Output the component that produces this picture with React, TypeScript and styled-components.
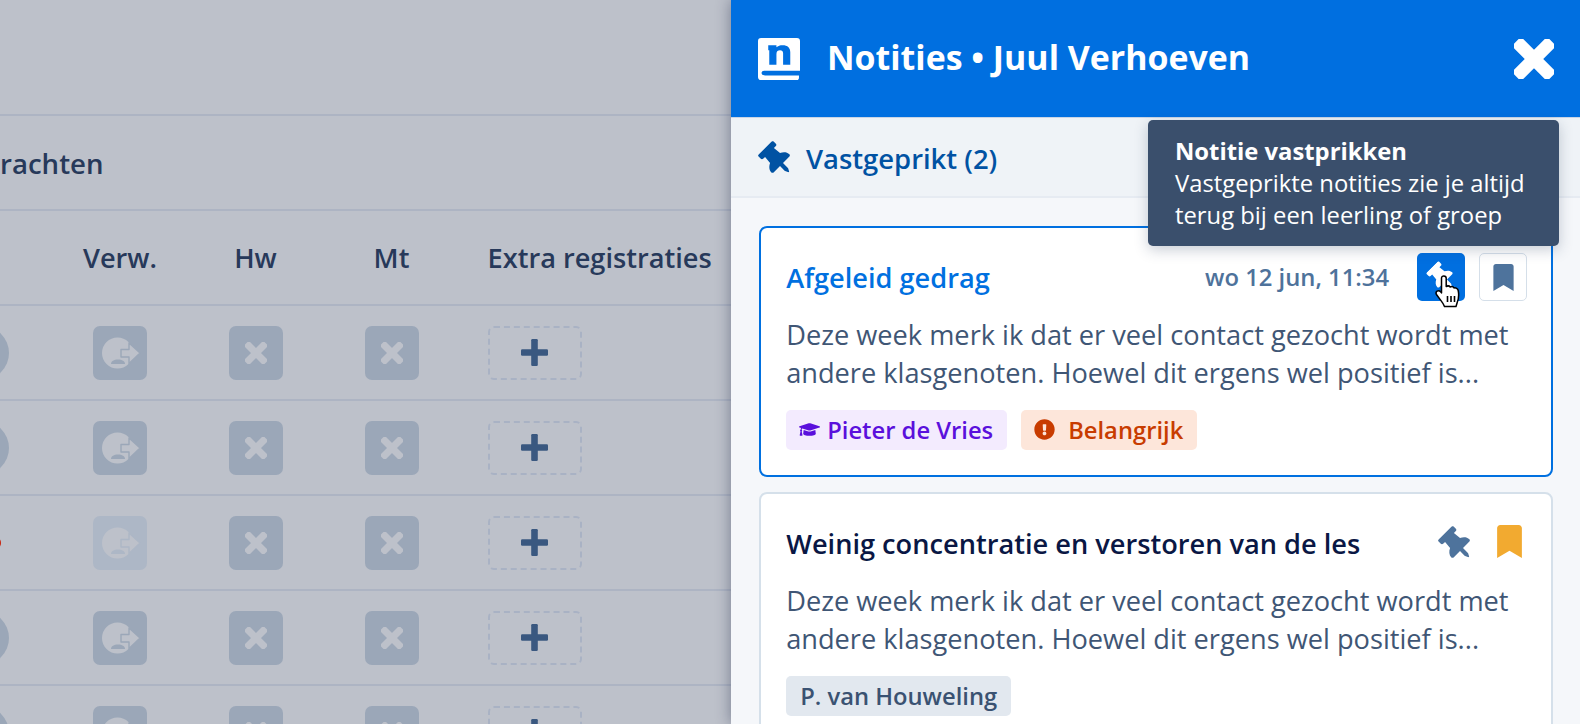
import styled, { createGlobalStyle } from "styled-components";
import { FaBookmark, FaExclamationCircle, FaGraduationCap, FaThumbtack } from "react-icons/fa";

const GlobalStyle = createGlobalStyle`
	html, body {
		margin: 0;
		height: 724px;
		overflow: hidden;
		font-family: "Open Sans", "Noto Sans", sans-serif;
	}
`;

const Page = styled.div`
	display: flex;
	width: 1580px;
	height: 724px;
	overflow: hidden;
	background: #bdc1ca;
`;

const Backdrop = styled.div`
	flex: 0 0 731px;
	overflow: hidden;
	color: #27395a;
`;

const TopBar = styled.div`
	height: 114px;
	border-bottom: 2px solid #adb4c3;
`;

const TabBar = styled.div`
	height: 93px;
	display: flex;
	align-items: center;
	border-bottom: 2px solid #adb4c3;
	font-size: 27.6px;
	font-weight: 600;
`;

const TableRow = styled.div`
	height: 93px;
	display: grid;
	grid-template-columns: 93px 135.5px 136px 123px 1fr;
	align-items: center;
	border-bottom: 2px solid #adb4c3;
`;

const HeadCell = styled.div<{ $left?: boolean }>`
	width: 54px;
	display: flex;
	justify-content: ${(props) => (props.$left ? "flex-start" : "center")};
	white-space: nowrap;
	font-size: 27.2px;
	font-weight: 600;
`;

const Avatar = styled.div`
	width: 54px;
	height: 54px;
	margin-left: -45px;
	border-radius: 50%;
	background: #9ba7b8;
`;

const AlertMark = styled.div`
	width: 11px;
	height: 12px;
	margin-left: -10px;
	border-radius: 50%;
	background: #c8240f;
`;

const StatusBox = styled.div<{ $faded?: boolean }>`
	width: 54px;
	height: 54px;
	display: flex;
	align-items: center;
	justify-content: center;
	border-radius: 7px;
	background: ${(props) => (props.$faded ? "#adb7c6" : "#9ba7b8")};
`;

const AddBox = styled.div`
	width: 94px;
	height: 54px;
	box-sizing: border-box;
	display: flex;
	align-items: center;
	justify-content: center;
	border: 2px dashed #a9b2c4;
	border-radius: 6px;
`;

const Panel = styled.div`
	flex: 1;
	display: flex;
	flex-direction: column;
	height: 724px;
	background: #f5f7fa;
	box-shadow: 0 0 14px rgba(30, 40, 70, 0.45);
	position: relative;
`;

const PanelHeader = styled.div`
	flex: 0 0 117px;
	display: flex;
	align-items: center;
	padding: 0 26px 0 27px;
	background: #006fe0;
	color: #fff;
	font-size: 33.9px;
	font-weight: 700;
`;

const HeaderTitle = styled.div`
	flex: 1;
	margin: -3px 0 0 27px;
	white-space: nowrap;
`;

const PinnedBar = styled.div`
	flex: 0 0 81px;
	box-sizing: border-box;
	display: flex;
	align-items: center;
	gap: 12px;
	padding: 2px 28px 0 29px;
	background: #eff3f7;
	border-top: 1px solid #c9d5e6;
	border-bottom: 2px solid #e6ebf2;
	color: #0052a3;
	font-size: 27.4px;
	font-weight: 600;
`;

const NoteList = styled.div`
	display: flex;
	flex-direction: column;
	gap: 15px;
	padding: 28px 27px 0 28px;
	min-height: 0;
`;

const NoteCard = styled.div<{ $active?: boolean }>`
	box-sizing: border-box;
	flex-shrink: 0;
	height: 251px;
	padding: 25.2px 24px 25px 25.2px;
	background: #fff;
	border: 2px solid ${(props) => (props.$active ? "#0070e0" : "#d5e0ea")};
	border-radius: 8px;
`;

const NoteHead = styled.div`
	height: 48px;
	display: flex;
	align-items: center;
`;

const NoteTitle = styled.div<{ $active?: boolean }>`
	flex: 1;
	color: ${(props) => (props.$active ? "#0070e0" : "#0a1744")};
	font-size: 27.2px;
	font-weight: 600;
	white-space: nowrap;
`;

const NoteDate = styled.div`
	margin-right: 28px;
	color: #4e729b;
	font-size: 23.8px;
	font-weight: 600;
	white-space: nowrap;
`;

const NoteBody = styled.div`
	margin: 15px 0 18.5px;
	color: #3f5675;
	font-size: 27.2px;
	line-height: 37.5px;
	white-space: nowrap;
`;

const ChipRow = styled.div`
	display: flex;
	gap: 14px;
`;

const Chip = styled.div<{ $kind: "student" | "alert" | "teacher" }>`
	height: 40.5px;
	display: flex;
	align-items: center;
	gap: ${(props) => (props.$kind === "alert" ? "13px" : "7px")};
	padding: 0 14px 0 ${(props) => (props.$kind === "teacher" ? "14px" : "13px")};
	border-radius: 5px;
	font-size: 23.75px;
	font-weight: 600;
	white-space: nowrap;
	background: ${(props) =>
		props.$kind === "student" ? "#f3ebfe" : props.$kind === "alert" ? "#fde6da" : "#e2e8ef"};
	color: ${(props) =>
		props.$kind === "student" ? "#5a10dc" : props.$kind === "alert" ? "#c83c00" : "#3a5272"};
`;

const ActionWrap = styled.div`
	position: relative;
	display: flex;
	align-items: center;
	gap: 14px;
`;

const ActionButton = styled.div<{ $primary?: boolean }>`
	box-sizing: border-box;
	width: 48px;
	height: 48px;
	display: flex;
	align-items: center;
	justify-content: center;
	border-radius: 5px;
	background: ${(props) => (props.$primary ? "#006fe0" : "#fff")};
	border: ${(props) => (props.$primary ? "none" : "1.5px solid #d5dfe9")};
	color: ${(props) => (props.$primary ? "#fff" : "#4e739c")};
`;

const PinGlyph = styled(FaThumbtack)<{ $size: number; $drop?: number; $shift?: number }>`
	transform: rotate(-45deg);
	width: ${(props) => props.$size}px;
	height: ${(props) => props.$size}px;
	margin-top: ${(props) => props.$drop ?? 0}px;
	margin-left: ${(props) => props.$shift ?? 0}px;
`;

const PinColor = styled.div<{ $color: string }>`
	display: flex;
	color: ${(props) => props.$color};
`;

const Tooltip = styled.div`
	position: absolute;
	right: -32px;
	bottom: calc(100% + 7px);
	box-sizing: border-box;
	width: 411px;
	height: 126px;
	padding: 14.5px 20px 0 27px;
	border-radius: 5px;
	background: #3a4f6c;
	color: #fff;
	font-size: 23.8px;
	line-height: 32px;
	box-shadow: 0 4px 14px rgba(40, 60, 90, 0.25);
	white-space: nowrap;
	z-index: 3;
`;

const TooltipTitle = styled.div`
	font-weight: 700;
`;

const HandCursor = styled.svg`
	position: absolute;
	left: 18px;
	top: 22px;
	z-index: 4;
`;

const IconRow = styled.div`
	display: flex;
	align-items: center;
	gap: 19.5px;
	margin: -3px 1px 0 0;
`;

const NotesLogo = () => (
	<svg width="42" height="42" viewBox="0 0 41 41">
		<path
			fill="#fff"
			fillRule="evenodd"
			d="M3 0H38A3 3 0 0 1 41 3V32H7C4.5 32 3.5 33 3.5 34.2S4.5 36.5 7 36.5H40V38.5C40 40 39.5 41 38 41H3A3 3 0 0 1 0 38V3A3 3 0 0 1 3 0ZM10 7H18V9C19.5 7.6 21.5 7 24 7C29 7 31.5 9.5 31.5 14V26H24.5V15C24.5 13 23.5 12 21.5 12C19.5 12 18 13 18 15.5V26H11V12H10Z"
		/>
	</svg>
);

const CrossIcon = ({ size, color }: { size: number; color: string }) => (
	<svg width={size} height={size} viewBox="0 0 40 40">
		<g fill={color} transform="rotate(45 20 20)">
			<rect x="13.5" y="-5" width="13" height="50" rx="2.5" />
			<rect x="-5" y="13.5" width="50" height="13" rx="2.5" />
		</g>
	</svg>
);

const PlusIcon = () => (
	<svg width="27" height="27" viewBox="0 0 27 27">
		<g fill="#3a5880">
			<rect x="10.2" y="0" width="6.6" height="27" rx="1.2" />
			<rect x="0" y="10.2" width="27" height="6.6" rx="1.2" />
		</g>
	</svg>
);

const LeaveIcon = ({ back }: { back: string }) => (
	<svg width="54" height="54" viewBox="0 0 54 54">
		<circle cx="24.5" cy="27" r="15.5" fill="#bdc1ca" />
		<path
			d="M28 23.5H36V17L47 27L36 37.5V31H28Z"
			fill="#bdc1ca"
			stroke={back}
			strokeWidth="1.4"
			strokeLinejoin="round"
		/>
		<path d="M18 38C18 35 21 33.5 25 33.5S32 35 32 38Z" fill={back} />
	</svg>
);

const Pointer = () => (
	<HandCursor width="27" height="34" viewBox="0 0 27 34">
		<path
			d="M6.5 3.2C6.5 1.8 7.6.9 8.8.9S11.2 1.8 11.2 3.2V11.5C12.6 10.7 14.4 10.9 15.2 12C16.6 11.4 18.4 11.8 19 13C20.8 12.5 22.8 13.5 23.2 15.5C23.9 19 23.6 24 22.2 27.5L21 31.5H9.5C8.8 29.5 7.5 27.6 5.8 25.4L1.8 20C.8 18.6 1 17 2.1 16.2C3.2 15.4 4.6 15.7 5.6 16.8L6.5 17.9Z"
			fill="#fff"
			stroke="#000"
			strokeWidth="1.5"
			strokeLinejoin="round"
		/>
		<path d="M12.5 21V27M16 21V27M19.5 21V27" stroke="#000" strokeWidth="1.6" />
	</HandCursor>
);

const rows = [
	{ mark: "avatar", faded: false },
	{ mark: "avatar", faded: false },
	{ mark: "alert", faded: true },
	{ mark: "avatar", faded: false },
	{ mark: "avatar", faded: false },
];

const bodyText = (
	<>
		Deze week merk ik dat er veel contact gezocht wordt met
		<br />
		andere klasgenoten. Hoewel dit ergens wel positief is...
	</>
);

export default function App() {
	return (
		<Page>
			<GlobalStyle />
			<Backdrop>
				<TopBar />
				<TabBar>rachten</TabBar>
				<TableRow>
					<div />
					<HeadCell>Verw.</HeadCell>
					<HeadCell>Hw</HeadCell>
					<HeadCell>Mt</HeadCell>
					<HeadCell $left>Extra registraties</HeadCell>
				</TableRow>
				{rows.map((row, i) => (
					<TableRow key={i}>
						<div>{row.mark === "avatar" ? <Avatar /> : <AlertMark />}</div>
						<StatusBox $faded={row.faded}>
							<LeaveIcon back={row.faded ? "#adb7c6" : "#9ba7b8"} />
						</StatusBox>
						<StatusBox>
							<CrossIcon size={22} color="#bdc1ca" />
						</StatusBox>
						<StatusBox>
							<CrossIcon size={22} color="#bdc1ca" />
						</StatusBox>
						<AddBox>
							<PlusIcon />
						</AddBox>
					</TableRow>
				))}
			</Backdrop>
			<Panel>
				<PanelHeader>
					<NotesLogo />
					<HeaderTitle>Notities • Juul Verhoeven</HeaderTitle>
					<CrossIcon size={40} color="#fff" />
				</PanelHeader>
				<PinnedBar>
					<PinColor $color="#0052a3">
						<PinGlyph $size={34} $drop={4} />
					</PinColor>
					Vastgeprikt (2)
				</PinnedBar>
				<NoteList>
					<NoteCard $active>
						<NoteHead>
							<NoteTitle $active>Afgeleid gedrag</NoteTitle>
							<NoteDate>wo 12 jun, 11:34</NoteDate>
							<ActionWrap>
								<Tooltip>
									<TooltipTitle>Notitie vastprikken</TooltipTitle>
									Vastgeprikte notities zie je altijd
									<br />
									terug bij een leerling of groep
								</Tooltip>
								<ActionButton $primary>
									<PinGlyph $size={28} $shift={2} />
								</ActionButton>
								<ActionButton>
									<FaBookmark size={27} />
								</ActionButton>
								<Pointer />
							</ActionWrap>
						</NoteHead>
						<NoteBody>{bodyText}</NoteBody>
						<ChipRow>
							<Chip $kind="student">
								<FaGraduationCap size={21} />
								Pieter de Vries
							</Chip>
							<Chip $kind="alert">
								<FaExclamationCircle size={21} />
								Belangrijk
							</Chip>
						</ChipRow>
					</NoteCard>
					<NoteCard>
						<NoteHead>
							<NoteTitle>Weinig concentratie en verstoren van de les</NoteTitle>
							<IconRow>
								<PinColor $color="#4e739c">
									<PinGlyph $size={34} $drop={6} />
								</PinColor>
								<PinColor $color="#f2aa30">
									<FaBookmark size={33} />
								</PinColor>
							</IconRow>
						</NoteHead>
						<NoteBody>{bodyText}</NoteBody>
						<ChipRow>
							<Chip $kind="teacher">P. van Houweling</Chip>
						</ChipRow>
					</NoteCard>
				</NoteList>
			</Panel>
		</Page>
	);
}
